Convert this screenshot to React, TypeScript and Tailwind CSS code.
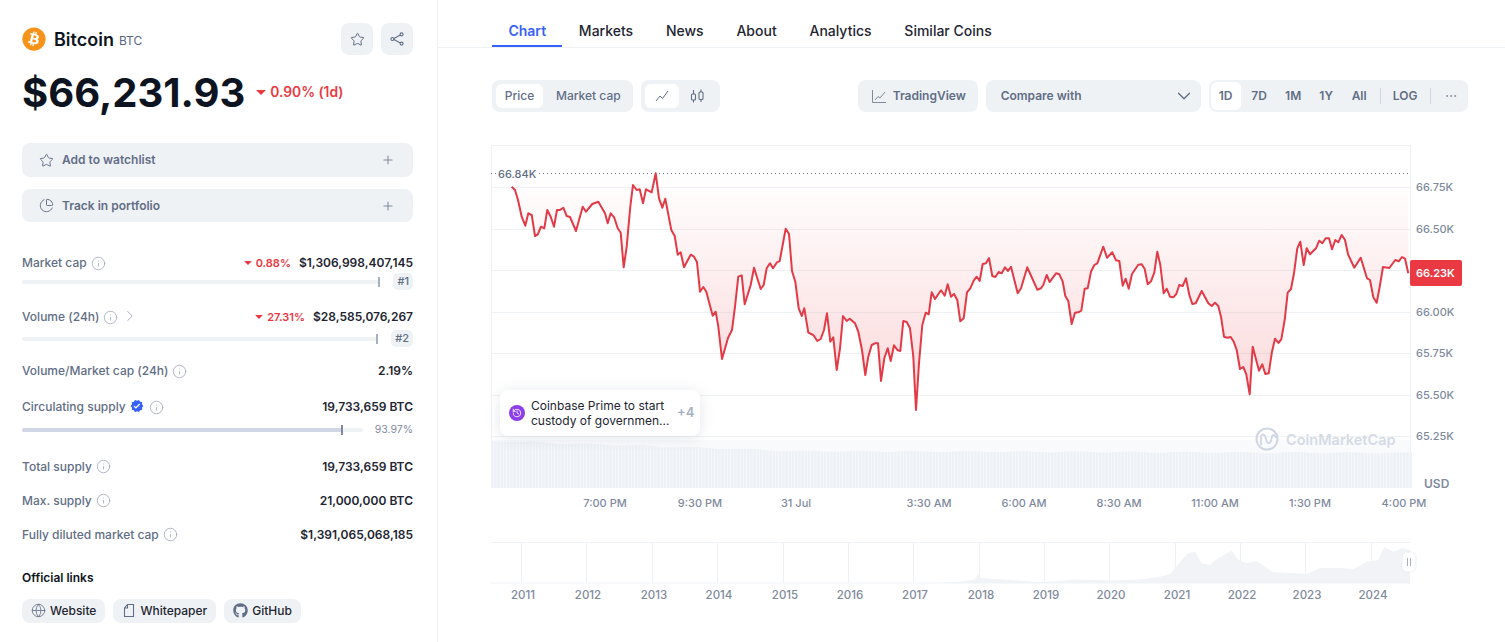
import { ChevronDown, ChevronRight, Ellipsis, Globe, History, Info, PieChart, Plus, Star } from 'lucide-react'
import { FaBitcoin, FaGithub } from 'react-icons/fa'
import { MdVerified } from 'react-icons/md'

const LINE = '511.7,186.7 515,190 518,200 521.7,216.7 525.3,225.7 528.3,213.3 531.7,215 535,236 537.7,234.7 541,226.7 544.3,228.3 547.3,210 550.7,216.7 554,226.7 557,210 560,210 563.3,207.7 566.7,216 570,217 576,231 582.7,206.7 586,211.7 592.3,204 598.3,201.7 605,213.3 607.7,223.3 610.7,213.3 614.3,217.7 617.7,228.3 620.7,232.7 623.7,267.3 626.7,246.7 630.3,206.7 633,185 636.7,190 639.7,189.3 643,203.3 646,189.3 651.7,192.3 655.7,173.3 659,198.3 662.3,207.7 665.3,198.7 671.3,230 674.7,236 677.7,254.7 680.7,252.3 684,267.3 690.7,254.7 694,256.7 697,262.3 700,291.7 703.3,287 706.3,291.7 712.7,315.7 715.7,311.7 718.3,326.7 722,359 728,338 732,330 735,306.7 738.3,276.7 741.7,275.3 744.7,304.3 750.7,285 754,267.7 760.7,289 763.7,285 766.7,268.3 770,263.3 773,268.3 776.7,262.7 779.7,261 785.7,228.7 789,234 792,271 795.3,281.7 798.7,308.3 801.7,316 804.3,308.3 808.3,332.7 813.3,335 817.3,341 820.7,339 824,330 827,313.3 830.3,341.7 833.3,337.3 836.7,370 840,348.3 843,316 846.7,321 849.7,318.7 855,323.3 858.3,331.7 862,350 865.3,375 868.3,356.7 871.7,345 875,343.3 878,343.3 881,381 884.3,358.3 887.7,348.3 890.7,361 894,345.3 897.3,350 900.3,351 903.3,321 906.7,322 910,328.3 913.3,356.7 916,410 919,363.3 922.3,325 925.7,312.7 928.7,314.3 931.7,292.3 935,299 941,290.3 944.7,295.7 947.7,284.3 951,296.7 954,294 957.3,300 960.3,321.3 963.7,318.3 967,292.3 970.3,288.3 973.7,280.7 976.7,276.7 979.7,281 982.7,264 986,263.3 989,258 992.3,276 995.3,277 998.7,272 1001.7,273.3 1005,267.3 1008,271 1011,266.7 1017.7,293.3 1021,288.3 1027.3,267.3 1030.7,275 1037.3,289.7 1041,288.3 1043.3,285 1046.7,275 1049.7,282 1056,273.3 1059.3,274.3 1062.7,281.7 1065.3,296 1068.3,301 1071.7,324 1075,312.7 1078.3,312.3 1081.3,310.7 1084.7,288.7 1087.7,288.3 1091,271.7 1094.3,265 1097.3,263.3 1103.3,246.7 1107,257.7 1112.3,252.3 1116,260.3 1119.3,261 1122.7,285.7 1125.7,278.7 1128.7,288.7 1132,274 1138.3,264.7 1141.7,264.3 1144.7,269 1147.7,284.3 1151,281.3 1154.3,272.7 1157.3,251.7 1160.3,265 1163.7,293.3 1166.7,288.7 1170,296.7 1173.3,297.3 1176.3,294 1179.3,285 1182.7,286 1186,278.3 1189.3,295 1192.3,304 1195.7,303.3 1201.7,291 1208.3,303.3 1211.7,306 1215,302.7 1218.3,306 1221,316.7 1224,336.7 1227.3,337.7 1230.7,337 1233.7,341.7 1236.7,350 1240,369 1243.3,367 1246.3,374.3 1249.7,394.3 1252.7,346.7 1259,370.7 1262.3,364.3 1265.3,374 1268.7,373.3 1272,351.7 1275,338.7 1278.3,343 1281.3,339.3 1284.7,320 1287.7,292.7 1291,289 1294,273.3 1297.3,248.3 1300.3,241.7 1303.7,265 1306.7,248.3 1310,254.3 1316,248.3 1319.3,240.7 1322.3,243.3 1325.7,238.3 1329,238.3 1332,249.3 1335.3,240 1338.3,242.3 1341.7,235 1345,240 1348,254.3 1354.3,267.7 1360.7,257.7 1367,278.3 1370,280 1373.3,297.3 1376.7,302.7 1379.7,286.7 1383,267 1389.3,268 1395.3,260 1398.7,261.3 1402,257 1405,258.7 1408.3,273.3'
const MINI = '491,583 940,583 960,581.5 975,579.5 977.5,574 981,578 1010,580 1040,582 1060,581 1075,579.5 1110,580.5 1140,579.5 1160,576.7 1170,574 1175,568.3 1181.7,560 1188.3,553.3 1195,551.7 1201.7,563.3 1210,565 1218,558.3 1231.7,550.7 1238.3,560 1246.7,563.3 1256.7,561 1265,566.7 1273.3,572.3 1293.3,573.3 1306.7,574 1320,568.3 1336.7,567.7 1353.3,569.3 1366.7,561.7 1378.3,560 1384.3,546.7 1393.3,551.7 1401.7,548.3 1410,550 1410,583'
const GRID = [187, 229, 270, 312, 353, 395, 436]
const PRICES = [['66.75K', 187], ['66.50K', 229], ['66.00K', 312], ['65.75K', 353], ['65.50K', 395], ['65.25K', 436]] as const
const TIMES = [['7:00 PM', 605], ['9:30 PM', 700], ['31 Jul', 796], ['3:30 AM', 929], ['6:00 AM', 1024], ['8:30 AM', 1119], ['11:00 AM', 1215], ['1:30 PM', 1310], ['4:00 PM', 1404]] as const
const YEARS = [[2011, 523], [2012, 588], [2013, 654], [2014, 719], [2015, 785], [2016, 850], [2017, 915], [2018, 981], [2019, 1046], [2020, 1111], [2021, 1177], [2022, 1242], [2023, 1307], [2024, 1373]] as const
const TABS = ['Chart', 'Markets', 'News', 'About', 'Analytics', 'Similar Coins']

// volume bars, top edge drifts from 441 on the left to 453 on the right
const BARS = Array.from({ length: 288 }, (_, i) => {
  const x = 491 + i * 3.2
  const t = i / 287
  const top = 441 + Math.min(t * 3, 1) * 9 + t * 3 + Math.sin(i * 0.37) * 0.6
  return { x, top }
})

function Caret() {
  return <span className="inline-block w-0 h-0 border-x-[4px] border-x-transparent border-t-[4px] border-t-[#ea3943] mr-1 rounded-[1px]" />
}

function Label({ children }: { children: React.ReactNode }) {
  return (
    <div className="flex items-center gap-[4px] text-[12px] font-medium text-[#616e85]">
      <span>{children}</span>
      <Info size={15} strokeWidth={1.3} className="text-[#a1a7bb]" />
    </div>
  )
}

function StatRow({ label, value, extra }: { label: React.ReactNode; value: string; extra?: React.ReactNode }) {
  return (
    <div className="flex items-center justify-between h-[18px]">
      {label}
      <div className="flex items-center gap-2">
        {extra}
        <span className="text-[12px] font-semibold text-[#222531]">{value}</span>
      </div>
    </div>
  )
}

function RankBar({ rank, className }: { rank: string; className: string }) {
  return (
    <div className={`flex items-center gap-[13px] ${className}`}>
      <div className="relative flex-1 h-[4px] rounded-full bg-[#eff2f5]">
        <div className="absolute right-0 top-[-3px] w-[2px] h-[10px] bg-[#a6b0c3]" />
      </div>
      <span className="flex items-center justify-center h-[17px] px-[4px] rounded-[5px] bg-[#eff2f5] text-[11px] font-medium text-[#616e85]">{rank}</span>
    </div>
  )
}

function WideButton({ icon, text, className }: { icon: React.ReactNode; text: string; className: string }) {
  return (
    <button className={`flex items-center w-full pl-[17px] pr-[18px] rounded-lg bg-[#eff2f5] text-[12px] font-semibold text-[#616e85] ${className}`}>
      {icon}
      <span className="ml-[8px]">{text}</span>
      <Plus size={14} strokeWidth={1.8} className="ml-auto text-[#808a9d]" />
    </button>
  )
}

function LinkPill({ icon, text }: { icon: React.ReactNode; text: string }) {
  return (
    <span className="flex items-center gap-[4px] h-[24px] pl-[9px] pr-[9px] rounded-lg bg-[#eff2f5] text-[12px] font-medium text-[#222531]">
      {icon}
      {text}
    </span>
  )
}

function Sidebar() {
  return (
    <aside className="w-[438px] shrink-0 h-full border-r border-[#eff2f5] pl-[22px] pr-[24px] pt-[23px]">
      <div className="flex items-center h-[32px]">
        <FaBitcoin size={24} color="#f7931a" />
        <span className="ml-2 text-[18px] font-semibold text-[#0d1421]">Bitcoin</span>
        <span className="ml-[5px] mt-[3px] text-[12px] text-[#58667e]">BTC</span>
        <div className="ml-auto flex gap-2">
          <span className="flex items-center justify-center w-[32px] h-[32px] rounded-lg bg-[#eff2f5]">
            <Star size={15} strokeWidth={1.6} className="text-[#616e85]" />
          </span>
          <span className="flex items-center justify-center w-[32px] h-[32px] rounded-lg bg-[#eff2f5]">
            <svg width="14" height="14" viewBox="0 0 14 14" fill="none" stroke="#616e85" strokeWidth="1.1">
              <path d="M11.2 2.6 L3 6.9 L11.2 11.4" />
              <circle cx="11.6" cy="2.4" r="1.5" fill="#eff2f5" />
              <circle cx="2.4" cy="7" r="1.5" fill="#eff2f5" />
              <circle cx="11.6" cy="11.6" r="1.5" fill="#eff2f5" />
            </svg>
          </span>
        </div>
      </div>
      <div className="flex items-center mt-[14px] h-[48px]">
        <span className="text-[40px] font-bold leading-[48px] text-[#0d1421]">$66,231.93</span>
        <span className="flex items-center ml-[11px] mb-[1px] text-[13.8px] font-semibold text-[#ea3943]">
          <span className="inline-block w-0 h-0 border-x-[5px] border-x-transparent border-t-[5px] border-t-[#ea3943] mr-[4px]" />
          0.90% (1d)
        </span>
      </div>
      <div className="mt-[26px] flex flex-col gap-[12px]">
        <WideButton className="h-[34px]" icon={<Star size={15} strokeWidth={1.5} className="text-[#616e85]" />} text="Add to watchlist" />
        <WideButton className="h-[33px]" icon={<PieChart size={15} strokeWidth={1.5} className="text-[#616e85]" />} text="Track in portfolio" />
      </div>

      <div className="mt-[32px]">
        <StatRow
          label={<Label>Market cap</Label>}
          value="$1,306,998,407,145"
          extra={<span className="flex items-center text-[11px] font-semibold text-[#ea3943]"><Caret />0.88%</span>}
        />
        <RankBar rank="#1" className="mt-[1px]" />
      </div>
      <div className="mt-[18px]">
        <StatRow
          label={
            <div className="flex items-center gap-[3px]">
              <Label>Volume (24h)</Label>
              <ChevronRight size={18} strokeWidth={1.2} className="text-[#a1a7bb] mb-[3px]" />
            </div>
          }
          value="$28,585,076,267"
          extra={<span className="flex items-center text-[11px] font-semibold text-[#ea3943]"><Caret />27.31%</span>}
        />
        <RankBar rank="#2" className="mt-[4px]" />
      </div>
      <div className="mt-[15px]">
        <StatRow label={<Label>Volume/Market cap (24h)</Label>} value="2.19%" />
      </div>
      <div className="mt-[18px]">
        <StatRow
          label={
            <div className="flex items-center gap-[4px] text-[12px] font-medium text-[#616e85]">
              <span>Circulating supply</span>
              <MdVerified size={14} color="#3861fb" className="mb-[3px]" />
              <Info size={15} strokeWidth={1.3} className="text-[#a1a7bb] ml-[1px]" />
            </div>
          }
          value="19,733,659 BTC"
        />
        <div className="flex items-center gap-[12px] mt-[6px]">
          <div className="relative flex-1 h-[4px] rounded-full bg-[#eff2f5]">
            <div className="h-full w-[93.5%] rounded-l-full bg-[#cfd6e4]" />
            <div className="absolute left-[93.5%] top-[-3px] w-[2px] h-[10px] bg-[#808a9d]" />
          </div>
          <span className="text-[10.5px] text-[#808a9d]">93.97%</span>
        </div>
      </div>
      <div className="mt-[20px] flex flex-col gap-[16px]">
        <StatRow label={<Label>Total supply</Label>} value="19,733,659 BTC" />
        <StatRow label={<Label>Max. supply</Label>} value="21,000,000 BTC" />
        <StatRow label={<Label>Fully diluted market cap</Label>} value="$1,391,065,068,185" />
      </div>
      <div className="mt-[25px] text-[12px] font-semibold text-[#0d1421] leading-[18px]">Official links</div>
      <div className="mt-[12px] flex gap-2">
        <LinkPill icon={<Globe size={15} strokeWidth={1.3} className="text-[#616e85]" />} text="Website" />
        <LinkPill
          icon={
            <svg width="14" height="15" viewBox="0 0 14 15" fill="none" stroke="#616e85" strokeWidth="1.1">
              <path d="M5.5 1.5 H11.5 V13.5 H2.5 V5 Z M5.5 1.5 V5 H2.5" />
            </svg>
          }
          text="Whitepaper"
        />
        <LinkPill icon={<FaGithub size={15} className="text-[#616e85]" />} text="GitHub" />
      </div>
    </aside>
  )
}

function Tabs() {
  return (
    <div className="flex h-[48px] border-b border-[#eff2f5] pl-[54px]">
      {TABS.map((t, i) => (
        <span
          key={t}
          className={`flex items-center h-[47px] px-[16.4px] pt-[15px] border-b-2 text-[14px] font-medium ${i === 0 ? 'border-[#3861fb] text-[#3861fb] font-semibold' : 'border-transparent text-[#222531]'}`}
        >
          {t}
        </span>
      ))}
    </div>
  )
}

function Toolbar() {
  return (
    <div className="flex items-center h-[32px] mt-[32px] pl-[54px] text-[12px] font-semibold text-[#616e85]">
      <div className="flex items-center h-full p-[4px] rounded-lg bg-[#eff2f5]">
        <span className="flex items-center justify-center w-[47px] h-[24px] rounded-md bg-white font-medium">Price</span>
        <span className="ml-[13px] mr-[8px] font-medium">Market cap</span>
      </div>
      <div className="flex items-center h-full p-[4px] ml-[8px] rounded-lg bg-[#eff2f5]">
        <span className="flex items-center justify-center w-[34px] h-[24px] rounded-md bg-white">
          <svg width="14" height="14" viewBox="0 0 14 14" fill="none" stroke="#616e85" strokeWidth="1"><path d="M1 12 L5 7 L7.5 9.5 L13 2" /></svg>
        </span>
        <span className="flex items-center justify-center w-[37px] h-[24px]">
          <svg width="15" height="15" viewBox="0 0 15 15" fill="none" stroke="#616e85" strokeWidth="1.1">
            <path d="M3.5 1 V13.5 M11 .5 V13" />
            <rect x="1.5" y="5" width="4" height="6" rx="1" fill="#eff2f5" />
            <rect x="9" y="3" width="4" height="7.5" rx="1" fill="#eff2f5" />
          </svg>
        </span>
      </div>
      <div className="flex items-center h-full w-[120px] ml-[138px] pl-[14px] gap-[7px] rounded-lg bg-[#eff2f5]">
        <svg width="14" height="14" viewBox="0 0 14 14" fill="none" stroke="#808a9d" strokeWidth="1"><path d="M.5 1 V13.5 H14" /><path d="M3 11 L6 7.5 L8 9 L13 3" /></svg>
        TradingView
      </div>
      <div className="flex items-center h-full w-[215px] ml-[8px] pl-[15px] pr-[6px] rounded-lg bg-[#eff2f5]">
        Compare with
        <ChevronDown size={22} strokeWidth={1.3} className="ml-auto text-[#58667e]" />
      </div>
      <div className="flex items-center h-full w-[259px] ml-[8px] p-[2px] rounded-lg bg-[#eff2f5]">
        <span className="flex items-center justify-center w-[30px] h-[28px] rounded-md bg-white">1D</span>
        <span className="w-[37px] text-center">7D</span>
        <span className="w-[31px] text-center">1M</span>
        <span className="w-[35px] text-center">1Y</span>
        <span className="w-[31px] text-center">All</span>
        <span className="w-px h-[16px] ml-[5px] bg-[#cfd6e4]" />
        <span className="w-[49px] text-center">LOG</span>
        <span className="w-px h-[16px] bg-[#cfd6e4]" />
        <Ellipsis size={14} strokeWidth={1.4} className="ml-[13px] text-[#808a9d]" />
      </div>
    </div>
  )
}

// whole chart is one drawing, viewBox matches page coordinates
function PriceChart() {
  return (
    <svg width={1067} height={490} viewBox="438 120 1067 490" className="block mt-[8px]">
      <defs>
        <linearGradient id="fill" gradientUnits="userSpaceOnUse" x1="0" y1="173" x2="0" y2="410">
          <stop offset="0" stopColor="#ea3943" stopOpacity="0" />
          <stop offset="1" stopColor="#ea3943" stopOpacity="0.2" />
        </linearGradient>
      </defs>
      <path d="M491.5 488 V145.5 H1410.5 V488" fill="none" stroke="#eff2f5" />
      {GRID.map(y => <line key={y} x1="491" x2="1411" y1={y + 0.5} y2={y + 0.5} stroke="#eff2f5" />)}

      {BARS.map(b => <rect key={b.x} x={b.x} y={b.top} width="2.6" height={488 - b.top} fill="#eff2f5" />)}
      <rect x="491" y="440" width="920" height="48" fill="#eff2f5" opacity="0.35" />

      <polygon points={`511.7,173 ${LINE} 1408.3,173`} fill="url(#fill)" />
      <line x1="491" x2="1411" y1="173.5" y2="173.5" stroke="#616e85" strokeDasharray="1 3" />
      <rect x="496" y="166" width="42" height="15" fill="white" />
      <text x="498" y="178" fontSize="11" fontWeight="500" fill="#616e85">66.84K</text>
      <polyline points={LINE} fill="none" stroke="#e23a46" strokeWidth="2" strokeLinejoin="round" />

      {PRICES.map(([p, y]) => (
        <text key={p} x="1416" y={y + 4} fontSize="11" fontWeight="500" fill="#808a9d">{p}</text>
      ))}
      <rect x="1410" y="260" width="52" height="26" rx="2" fill="#ea3943" />
      <text x="1416" y="277" fontSize="11" fontWeight="600" fill="white">66.23K</text>
      <text x="1424" y="488" fontSize="12" fontWeight="600" fill="#808a9d">USD</text>

      {TIMES.map(([t, x]) => (
        <text key={t} x={x} y="507" textAnchor="middle" fontSize="11" fontWeight="500" fill="#808a9d">{t}</text>
      ))}

      <g fill="none" stroke="#cfd6e4" strokeWidth="2">
        <circle cx="1267" cy="439" r="10.5" />
        <path d="M1261 445 L1261 436 Q1263 433 1265 436 L1267 442 Q1269 445 1271 441 L1272 436 Q1274 433 1276 438" strokeWidth="1.8" />
      </g>
      <text x="1286" y="445" fontSize="14.5" fontWeight="600" fill="#d5dbe6">CoinMarketCap</text>

      <path d="M491 542.5 H1410" stroke="#eff2f5" />
      {YEARS.map(([y, x]) => <line key={y} x1={x - 1.5} x2={x - 1.5} y1="542" y2="583" stroke="#eff2f5" />)}
      <polygon points={MINI} fill="#f1f3f6" />
      <path d="M491 583 H1410" stroke="#eff2f5" />
      {YEARS.map(([y, x]) => (
        <text key={y} x={x} y="599" textAnchor="middle" fontSize="11.5" fontWeight="500" fill="#808a9d">{y}</text>
      ))}

      <rect x="1402" y="552" width="14" height="20" rx="5" fill="white" stroke="#e3e6ec" strokeWidth="0.6" />
      <path d="M1407.5 558 V566 M1410.5 558 V566" stroke="#a6b0c3" />
    </svg>
  )
}

function NewsCard() {
  return (
    <div className="absolute left-[62px] top-[390px] flex items-center w-[200px] h-[46px] pl-[9px] rounded-lg bg-white shadow-[0_2px_14px_rgba(88,102,126,0.16)]">
      <span className="flex items-center justify-center w-[16px] h-[16px] rounded-full bg-[#8c3fe8] shrink-0">
        <History size={10} strokeWidth={2} className="text-white" />
      </span>
      <span className="ml-[6px] w-[146px] shrink-0 text-[12px] leading-[15px] text-[#222531]">
        Coinbase Prime to start custody of governmen...
      </span>
      <span className="text-[13px] font-semibold text-[#a6b0c3]">+4</span>
    </div>
  )
}

export default function App() {
  return (
    <div className="flex w-[1505px] h-[642px] overflow-hidden bg-white font-['Inter',sans-serif]">
      <Sidebar />
      <main className="relative flex-1 min-w-0">
        <Tabs />
        <Toolbar />
        <PriceChart />
        <NewsCard />
      </main>
    </div>
  )
}
